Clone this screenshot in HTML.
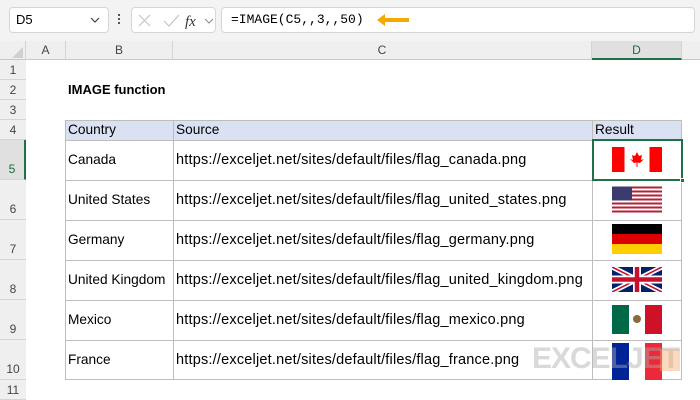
<!DOCTYPE html>
<html><head><style>
*{margin:0;padding:0;box-sizing:border-box}
body{width:700px;height:400px;overflow:hidden;background:#fff;font-family:"Liberation Sans",Calibri,sans-serif;position:relative;color:#000}
.a{position:absolute}
.box{position:absolute;background:#fff;border:1px solid #d6d6d6;border-radius:4px}
.ch{position:absolute;top:41px;height:19px;font-size:12px;color:#444;text-align:center;line-height:19px;border-right:1px solid #d4d4d4}
.rh{position:absolute;left:0;width:26px;font-size:12px;color:#444;text-align:center;border-bottom:1px solid #d4d4d4;background:#efefef}
.c{position:absolute;font-size:13.7px;line-height:20px;white-space:nowrap}
.u{font-size:14.5px;letter-spacing:0.2px}
.hl{position:absolute;height:1px;background:#bdbdbd}
.vl{position:absolute;width:1px;background:#bdbdbd}
.flag{position:absolute;left:612px;width:50px;height:25px}
</style></head><body>
<div class="a" style="left:0;top:0;width:700px;height:41px;background:#f3f3f3"></div>
<div class="box" style="left:9px;top:7px;width:100px;height:26px"></div>
<div class="c" style="left:16px;top:10px;font-size:13px">D5</div>
<svg class="a" style="left:90px;top:16px" width="10" height="8"><path d="M1 2 L5 6 L9 2" stroke="#444" fill="none" stroke-width="1.2"/></svg>
<div class="a" style="left:118px;top:14px;width:2px;height:2px;background:#555;box-shadow:0 4px #555,0 8px #555"></div>
<div class="box" style="left:131px;top:7px;width:85px;height:26px"></div>
<svg class="a" style="left:137px;top:13px" width="80" height="16"><path d="M2 2 L13 13 M13 2 L2 13" stroke="#c4c4c4" stroke-width="1.2"/><path d="M27 8 L32 13 L42 2" stroke="#c4c4c4" fill="none" stroke-width="1.2"/><text x="48" y="13" font-family="Liberation Serif" font-style="italic" font-size="15" fill="#333">fx</text><path d="M68 6 L72 10 L76 6" stroke="#888" fill="none"/></svg>
<div class="box" style="left:221px;top:7px;width:474px;height:26px"></div>
<div class="c" style="left:231px;top:10px;font-family:'Liberation Mono',monospace;font-size:13px">=IMAGE(C5,,3,,50)</div>
<svg class="a" style="left:375px;top:13px" width="36" height="14"><path d="M2 7 L10 1 L10 5 L34 5 L34 9 L10 9 L10 13 Z" fill="#f5a800"/></svg>
<div class="a" style="left:0;top:41px;width:700px;height:19px;background:#efefef;border-bottom:1px solid #c8c8c8"></div>
<svg class="a" style="left:10px;top:47px" width="14" height="12"><path d="M13 0 L13 11 L2 11 Z" fill="#d0d0d0"/></svg>
<div class="ch" style="left:0;width:26px"></div>
<div class="ch" style="left:26px;width:40px">A</div>
<div class="ch" style="left:66px;width:107px">B</div>
<div class="ch" style="left:173px;width:419px">C</div>
<div class="ch" style="left:592px;width:90px;background:#e0e0e0;color:#1e6b3a;border-bottom:2px solid #1e7145;height:19px">D</div>
<div class="a" style="left:25px;top:60px;width:1px;height:340px;background:#c8c8c8"></div>
<div class="rh" style="top:60px;height:20px;line-height:20px">1</div>
<div class="rh" style="top:80px;height:20px;line-height:20px">2</div>
<div class="rh" style="top:100px;height:20px;line-height:20px">3</div>
<div class="rh" style="top:120px;height:20px;line-height:20px">4</div>
<div class="rh" style="top:140px;height:40px;line-height:58px;background:#e0e0e0;color:#1e6b3a;border-right:2px solid #1e7145">5</div>
<div class="rh" style="top:180px;height:40px;line-height:58px">6</div>
<div class="rh" style="top:220px;height:40px;line-height:58px">7</div>
<div class="rh" style="top:260px;height:40px;line-height:58px">8</div>
<div class="rh" style="top:300px;height:40px;line-height:58px">9</div>
<div class="rh" style="top:340px;height:40px;line-height:58px">10</div>
<div class="rh" style="top:380px;height:20px;line-height:20px">11</div>
<div class="c" style="left:68px;top:80px;font-weight:bold;font-size:13px">IMAGE function</div>
<div class="a" style="left:66px;top:120px;width:616px;height:20px;background:#d9e1f2"></div>
<div class="hl" style="left:66px;top:120px;width:616px"></div>
<div class="hl" style="left:66px;top:140px;width:616px"></div>
<div class="hl" style="left:66px;top:180px;width:616px"></div>
<div class="hl" style="left:66px;top:220px;width:616px"></div>
<div class="hl" style="left:66px;top:260px;width:616px"></div>
<div class="hl" style="left:66px;top:300px;width:616px"></div>
<div class="hl" style="left:66px;top:340px;width:616px"></div>
<div class="hl" style="left:66px;top:379px;width:616px"></div>
<div class="vl" style="left:65px;top:120px;height:260px"></div>
<div class="vl" style="left:173px;top:120px;height:260px"></div>
<div class="vl" style="left:592px;top:120px;height:260px"></div>
<div class="vl" style="left:681px;top:120px;height:260px"></div>
<div class="c" style="left:68px;top:120px">Country</div>
<div class="c" style="left:176px;top:120px">Source</div>
<div class="c" style="left:595px;top:120px">Result</div>
<div class="c" style="left:68px;top:150px">Canada</div>
<div class="c" style="left:68px;top:190px">United States</div>
<div class="c" style="left:68px;top:230px">Germany</div>
<div class="c" style="left:68px;top:270px">United Kingdom</div>
<div class="c" style="left:68px;top:310px">Mexico</div>
<div class="c" style="left:68px;top:350px">France</div>
<div class="c u" style="left:176px;top:150px">https://exceljet.net/sites/default/files/flag_canada.png</div>
<div class="c u" style="left:176px;top:190px">https://exceljet.net/sites/default/files/flag_united_states.png</div>
<div class="c u" style="left:176px;top:230px">https://exceljet.net/sites/default/files/flag_germany.png</div>
<div class="c u" style="left:176px;top:270px">https://exceljet.net/sites/default/files/flag_united_kingdom.png</div>
<div class="c u" style="left:176px;top:310px">https://exceljet.net/sites/default/files/flag_mexico.png</div>
<div class="c u" style="left:176px;top:350px">https://exceljet.net/sites/default/files/flag_france.png</div>
<svg class="flag" style="top:147px" viewBox="0 0 50 25"><rect width="50" height="25" fill="#fff"/><rect width="12.5" height="25" fill="#f00"/><rect x="37.5" width="12.5" height="25" fill="#f00"/><path d="M25 5 L27 9 L30 8 L29 13 L32 12 L28 16 L25.5 15.5 L25.5 20 L24.5 20 L24.5 15.5 L22 16 L18 12 L21 13 L20 8 L23 9 Z" fill="#f00"/></svg>
<svg class="flag" style="top:186px;height:27px" viewBox="0 0 50 26"><rect width="50" height="26" fill="#fff"/><g fill="#b22234"><rect y="0" width="50" height="2"/><rect y="4" width="50" height="2"/><rect y="8" width="50" height="2"/><rect y="12" width="50" height="2"/><rect y="16" width="50" height="2"/><rect y="20" width="50" height="2"/><rect y="24" width="50" height="2"/></g><rect width="20" height="14" fill="#3c3b6e"/></svg>
<svg class="flag" style="top:224px;height:30px" viewBox="0 0 50 30"><rect width="50" height="10" fill="#000"/><rect y="10" width="50" height="10" fill="#dd0000"/><rect y="20" width="50" height="10" fill="#ffce00"/></svg>
<svg class="flag" style="top:267px" viewBox="0 0 50 25"><rect width="50" height="25" fill="#012169"/><path d="M0 0 L50 25 M50 0 L0 25" stroke="#fff" stroke-width="5"/><path d="M0 0 L50 25 M50 0 L0 25" stroke="#c8102e" stroke-width="1.6"/><path d="M25 0 V25 M0 12.5 H50" stroke="#fff" stroke-width="8"/><path d="M25 0 V25 M0 12.5 H50" stroke="#c8102e" stroke-width="4.5"/></svg>
<svg class="flag" style="top:305px;height:29px" viewBox="0 0 50 29"><rect width="17" height="29" fill="#006847"/><rect x="17" width="16" height="29" fill="#fff"/><rect x="33" width="17" height="29" fill="#ce1126"/><circle cx="25" cy="14" r="4" fill="#8c6a3a"/></svg>
<svg class="flag" style="top:343px;height:37px" viewBox="0 0 50 37"><rect width="17" height="37" fill="#002395"/><rect x="17" width="16" height="37" fill="#fff"/><rect x="33" width="17" height="37" fill="#ed2939"/></svg>
<div class="a" style="left:532px;top:342px;font-size:30px;font-weight:bold;color:rgba(170,170,170,0.45);letter-spacing:-1px">EXCELJET</div>
<div class="a" style="left:660px;top:349px;width:20px;height:22px;background:rgba(245,170,110,0.45)"></div>
<div class="a" style="left:592px;top:139px;width:91px;height:42px;border:2px solid #1e7145"></div>
<div class="a" style="left:680px;top:178px;width:5px;height:5px;background:#1e7145;border:1px solid #fff"></div>
</body></html>
